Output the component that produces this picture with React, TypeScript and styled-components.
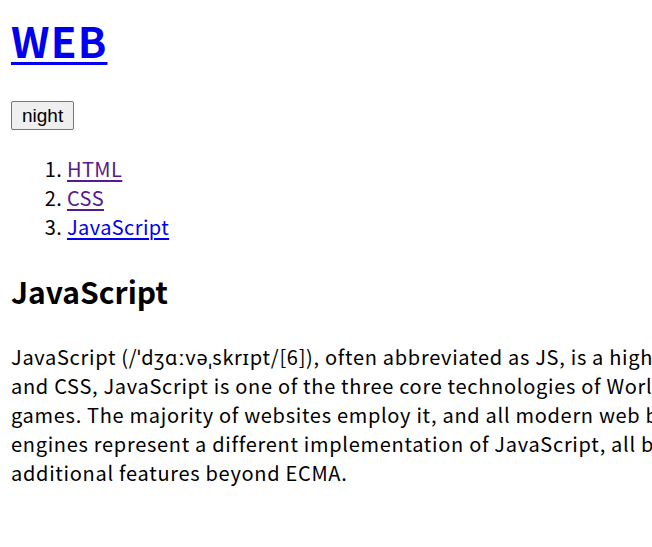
import React from "react";
import styled, { createGlobalStyle } from "styled-components";

const Global = createGlobalStyle`
  html, body { margin: 0; padding: 0; overflow: hidden; background: #fff; }
  body { font-family: "Noto Sans CJK KR", "Noto Sans", sans-serif; color: #000; }
`;

const Page = styled.div`
  padding: 0 11px;
  width: 1800px;
`;

const Title = styled.h1`
  margin: 8px 0 0;
  font-size: 42px;
  line-height: 64px;
  font-weight: 700;
  letter-spacing: 1.2px;
  a { color: #0000ee; text-decoration: underline; text-decoration-thickness: 3px; text-underline-offset: 4px; }
`;

const NightButton = styled.button`
  margin-top: 29px;
  font-family: "Liberation Sans", Arial, sans-serif;
  font-size: 19px;
  line-height: 23px;
  height: 29px;
  padding: 1px 10px;
  background: #efefef;
  border: 1px solid #767676;
  border-radius: 2px;
  color: #000;
`;

const List = styled.ol`
  margin: 24px 0 0;
  padding-left: 56px;
  font-size: 20px;
  line-height: 29px;
  letter-spacing: 0.4px;
`;

const Item = styled.li<{ $visited?: boolean }>`
  a { color: ${(p) => (p.$visited ? "#551a8b" : "#0000ee")}; text-decoration: underline; text-underline-offset: 3px; }
`;

const Heading = styled.h2`
  margin: 28px 0 0;
  font-size: 30px;
  line-height: 44px;
  font-weight: 700;
`;

const Para = styled.p`
  margin: 29px 0 0;
  font-size: 20px;
  line-height: 29px;
  letter-spacing: 0.7px;
  white-space: nowrap;
`;

export default function App() {
  return (
    <>
      <Global />
      <Page>
        <Title><a href="#">WEB</a></Title>
        <NightButton type="button">night</NightButton>
        <List>
          <Item $visited><a href="#">HTML</a></Item>
          <Item $visited><a href="#">CSS</a></Item>
          <Item><a href="#">JavaScript</a></Item>
        </List>
        <Heading>JavaScript</Heading>
        <Para>
          JavaScript (/ˈdʒɑːvəˌskrɪpt/[6]), often abbreviated as JS, is a high-level, just-in-time compiled, multi-paradigm programming language that conforms to the ECMAScript specification. Alongside HTML
          <br />
          and CSS, JavaScript is one of the three core technologies of World Wide Web content engineering. It is used to make dynamic web pages interactive and provide online programs, including video
          <br />
          games. The majority of websites employ it, and all modern web browsers support it without the need for plug-ins by means of a built-in JavaScript engine. Each of the many JavaScript
          <br />
          engines represent a different implementation of JavaScript, all based on the ECMAScript specification, with some engines not supporting the spec fully, and with many engines supporting
          <br />
          additional features beyond ECMA.
        </Para>
      </Page>
    </>
  );
}
